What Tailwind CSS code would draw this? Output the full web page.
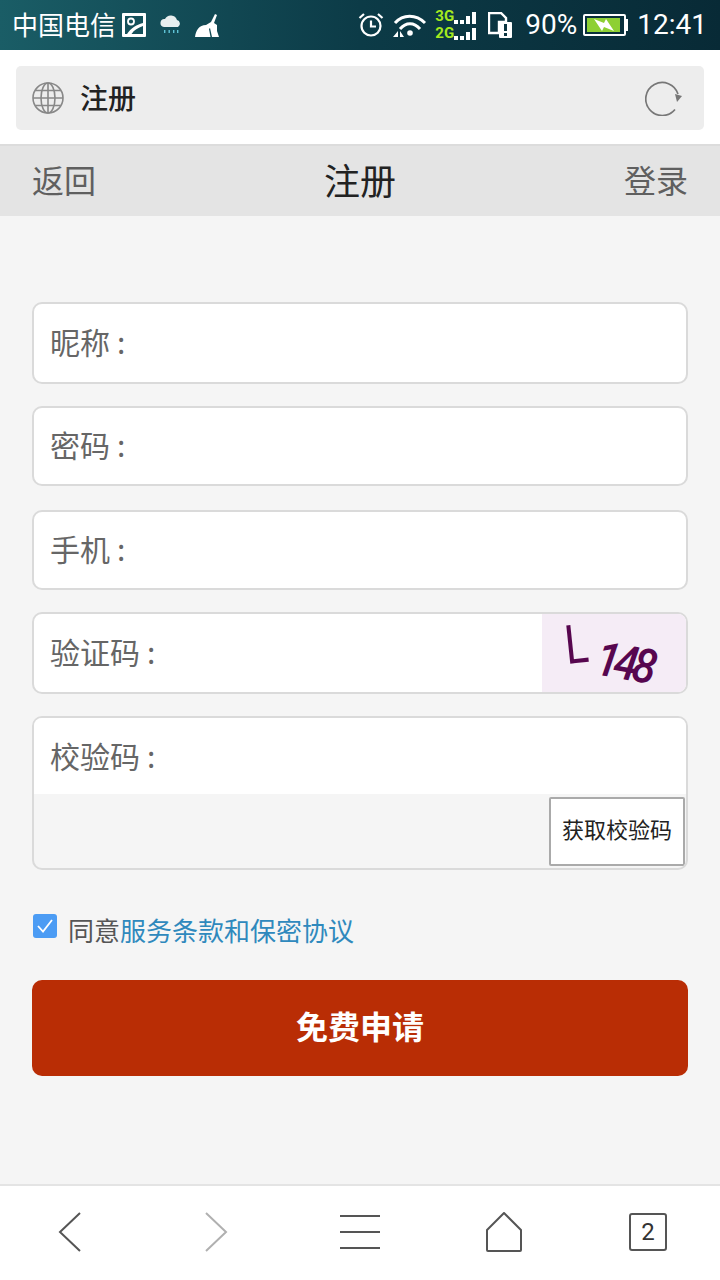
<!DOCTYPE html>
<html lang="zh-CN">
<head>
<meta charset="utf-8">
<title>注册</title>
<script src="https://cdn.jsdelivr.net/npm/@tailwindcss/browser@4"></script>
</head>
<body class="m-0">
<div class="w-[720px] h-[1280px] flex flex-col overflow-hidden bg-[#f5f5f5] font-['Roboto','Noto_Sans_CJK_SC',sans-serif]">
  <!-- status bar -->
  <div class="h-[50px] shrink-0 flex items-center justify-between pl-[12px] pr-[13px] text-white bg-gradient-to-r from-[#1a5d66] via-[#0c3b47] to-[#082a36]">
    <div class="flex items-center">
      <span class="text-[26px] leading-[50px] -translate-y-px font-['Noto_Sans_CJK_SC',sans-serif]">中国电信</span>
      <svg class="ml-[6px]" width="24" height="24" viewBox="0 0 24 24"><rect x="0" y="0" width="24" height="24" rx="1" fill="#fff"/><rect x="3" y="3" width="18" height="18" fill="#14505a"/><circle cx="9" cy="8.5" r="3" fill="none" stroke="#fff" stroke-width="1.8"/><path d="M5 21 C9 15 14 12 21 10 V13 C16 15 12 17 9.5 21Z" fill="#fff"/></svg>
      <svg class="ml-[13px]" width="24" height="20" viewBox="0 0 24 20"><path d="M5 12 a4 4 0 0 1 1-8 a6.5 6.5 0 0 1 12 1 a3.8 3.8 0 0 1 1 7Z" fill="#e8eeee"/><g fill="#5fc3d6"><rect x="5" y="15" width="1.4" height="3"/><rect x="9.5" y="15" width="1.4" height="3"/><rect x="14" y="15" width="1.4" height="3"/><rect x="18" y="15" width="1.4" height="3"/></g></svg>
      <svg class="ml-[12px]" width="24" height="24" viewBox="0 0 24 24"><path d="M0 24 C1 17 4 12 11 12 L16 9 L20 1 L22 2 L19 10 L22 12 L22 18 L24 24Z" fill="#fff"/><path d="M15 15 L17 24 H15.5 L14 16Z" fill="#0f4a54"/></svg>
    </div>
    <div class="flex items-center">
      <svg width="26" height="26" viewBox="0 0 26 26" fill="none" stroke="#fff" stroke-width="2.2"><circle cx="13" cy="14" r="9.5"/><path d="M13 8.5 V14.5 H18"/><path d="M1.5 6 L6 2 M24.5 6 L20 2"/></svg>
      <svg class="ml-[8px]" width="35" height="26" viewBox="0 0 35 26"><g fill="none" stroke="#fff" stroke-width="3"><path d="M3 11 C11 2 24 2 33 11"/><path d="M8 17 C14 10 22 10 28 17"/></g><circle cx="18" cy="21" r="2.8" fill="#fff"/><path d="M1 25 L6 19 V25Z M8 19 L12 25 H8Z" fill="#fff"/></svg>
      <div class="ml-[8px] w-[18px] flex flex-col text-[#a5ea1e] text-[15px] leading-[17px] font-bold font-['Roboto',sans-serif]">
        <span>3G</span><span>2G</span>
      </div>
      <div class="ml-[1px] flex flex-col gap-[3px]">
        <div class="flex items-end gap-[2px] h-[13px]"><i class="w-[4px] h-[4px] bg-white"></i><i class="w-[4px] h-[4px] bg-white"></i><i class="w-[4px] h-[8px] bg-white"></i><i class="w-[4px] h-[12px] bg-white"></i></div>
        <div class="flex items-end gap-[2px] h-[13px]"><i class="w-[4px] h-[4px] bg-white"></i><i class="w-[4px] h-[4px] bg-white"></i><i class="w-[4px] h-[8px] bg-white"></i><i class="w-[4px] h-[12px] bg-white"></i></div>
      </div>
      <svg class="ml-[12px]" width="24" height="26" viewBox="0 0 24 26"><path d="M1 1 H13 L18 6 V10 H11 V21 H1Z" fill="none" stroke="#fff" stroke-width="2.4"/><rect x="11" y="10" width="13" height="16" rx="1" fill="#fff"/><rect x="16" y="12" width="3" height="7" fill="#0b3541"/><rect x="16" y="21" width="3" height="3" fill="#0b3541"/></svg>
      <span class="ml-[13px] text-[28px] leading-[50px]">90%</span>
      <div class="ml-[6px] flex items-center">
        <div class="w-[43px] h-[22px] border-2 border-white rounded-[2px] p-[2px]">
          <div class="h-full w-[33px] bg-[#8ed033] flex items-center justify-center">
            <svg width="24" height="14" viewBox="0 0 24 14"><path d="M2 1 L12 5 L14 1 L22 13 L12 9 L10 13Z" fill="#fff"/></svg>
          </div>
        </div>
        <div class="w-[2px] h-[12px] bg-white"></div>
      </div>
      <span class="ml-[9px] text-[28px] leading-[50px]">12:41</span>
    </div>
  </div>
  <!-- address bar -->
  <div class="h-[96px] shrink-0 bg-white px-[16px] pt-[16px] border-b-2 border-[#dcdcdc]">
    <div class="h-[64px] rounded-[5px] bg-[#ededed] flex items-center pl-[16px] pr-[21px]">
      <svg width="32" height="32" viewBox="0 0 32 32" fill="none" stroke="#888" stroke-width="1.6"><circle cx="16" cy="16" r="15"/><ellipse cx="16" cy="16" rx="7" ry="15"/><path d="M16 1 V31 M1 16 H31 M3.5 8.5 H28.5 M3.5 23.5 H28.5"/></svg>
      <span class="ml-[16px] pb-[3px] text-[28px] leading-[32px] font-medium text-[#222] font-['Noto_Sans_CJK_SC',sans-serif]">注册</span>
      <svg class="ml-auto" width="38" height="36" viewBox="0 0 38 36" fill="none"><path d="M33 14 A16.5 16.5 0 1 0 30 29.5" stroke="#777" stroke-width="1.7"/><path d="M30 14 L37 16 L32 22Z" fill="#777"/></svg>
    </div>
  </div>
  <!-- page header -->
  <div class="h-[70px] shrink-0 bg-[#e4e4e4] flex items-center justify-between px-[32px] pb-[4px] font-['Noto_Sans_CJK_SC',sans-serif]">
    <span class="text-[32px] leading-[64px] text-[#5f5f5f]">返回</span>
    <span class="text-[36px] leading-[64px] text-[#222]">注册</span>
    <span class="text-[32px] leading-[64px] text-[#5f5f5f]">登录</span>
  </div>
  <!-- form -->
  <div class="flex-1 px-[32px] pt-[86px] font-['Noto_Sans_CJK_SC',sans-serif]">
    <div class="h-[82px] bg-white border-2 border-[#dadada] rounded-[10px] flex items-center pl-[16px] pb-[4px] text-[30px] text-[#666]">昵称<span class="ml-[7px]">:</span></div>
    <div class="mt-[22px] h-[80px] bg-white border-2 border-[#dadada] rounded-[10px] flex items-center pl-[16px] pb-[4px] text-[30px] text-[#666]">密码<span class="ml-[7px]">:</span></div>
    <div class="mt-[24px] h-[80px] bg-white border-2 border-[#dadada] rounded-[10px] flex items-center pl-[16px] pb-[4px] text-[30px] text-[#666]">手机<span class="ml-[7px]">:</span></div>
    <div class="mt-[22px] h-[82px] bg-white border-2 border-[#dadada] rounded-[10px] flex items-center justify-between pl-[16px] text-[30px] text-[#666] overflow-hidden">
      <span class="pb-[4px]">验证码<span class="ml-[7px]">:</span></span>
      <div class="w-[144px] h-full bg-[#f5ecf6] flex items-center pl-[20px] text-[#57064f] font-['Roboto',sans-serif]">
        <span class="inline-block text-[54px] leading-[54px] rotate-[-6deg] -translate-y-[8px] scale-x-[.8]">L</span>
        <span class="inline-block ml-[2px] text-[48px] leading-[48px] italic font-medium tracking-[-6px] rotate-[10deg] translate-y-[10px] scale-x-[.9]">148</span>
      </div>
    </div>
    <div class="mt-[22px] h-[154px] bg-[#f5f5f5] border-2 border-[#dadada] rounded-[10px] overflow-hidden flex flex-col">
      <div class="h-[76px] shrink-0 bg-white flex items-center pl-[16px] pb-[2px] text-[30px] text-[#666]">校验码<span class="ml-[7px]">:</span></div>
      <div class="flex-1 flex justify-end pt-[3px] pr-[1px]">
        <div class="w-[136px] h-[69px] bg-white border-2 border-[#aaaaaa] rounded-[2px] flex items-center justify-center pb-[6px] text-[22px] text-[#222]">获取校验码</div>
      </div>
    </div>
    <div class="mt-[46px] flex h-[28px] text-[26px] leading-[28px]">
      <div class="w-[24px] h-[24px] ml-px -mt-[2px] rounded-[3px] bg-[#4c9cf4] flex items-center justify-center">
        <svg width="24" height="24" viewBox="0 0 24 24" fill="none" stroke="#fff" stroke-width="1.8"><path d="M5 12 L10 17.5 L19 6"/></svg>
      </div>
      <span class="ml-[11px] text-[#555]">同意</span><span class="text-[#2f89bd]">服务条款和保密协议</span>
    </div>
    <div class="mt-[36px] h-[96px] rounded-[10px] bg-[#b92d05] flex items-center justify-center pb-[6px] text-white text-[32px] font-bold">免费申请</div>
  </div>
  <!-- bottom toolbar -->
  <div class="h-[96px] shrink-0 bg-white border-t-2 border-[#e4e4e4] flex items-center pl-[58px] pb-[2px]">
    <svg width="24" height="40" viewBox="0 0 24 40" fill="none" stroke="#555" stroke-width="2"><path d="M22 1 L2 20 L22 39"/></svg>
    <svg class="ml-[122px]" width="24" height="40" viewBox="0 0 24 40" fill="none" stroke="#b0b0b0" stroke-width="2"><path d="M2 1 L22 20 L2 39"/></svg>
    <svg class="ml-[112px]" width="40" height="36" viewBox="0 0 40 36" fill="none" stroke="#555" stroke-width="2"><path d="M0 2 H40 M0 18 H40 M0 34 H40"/></svg>
    <svg class="ml-[105px]" width="38" height="40" viewBox="0 0 38 40" fill="none" stroke="#555" stroke-width="2"><path d="M19 1 L36 18 V38 a1 1 0 0 1 -1 1 H3 a1 1 0 0 1 -1 -1 V18Z" stroke-linejoin="round"/></svg>
    <div class="ml-[106px] w-[38px] h-[38px] border-2 border-[#555] rounded-[3px] flex items-center justify-center text-[24px] leading-none text-[#333]">2</div>
  </div>
</div>
</body>
</html>
